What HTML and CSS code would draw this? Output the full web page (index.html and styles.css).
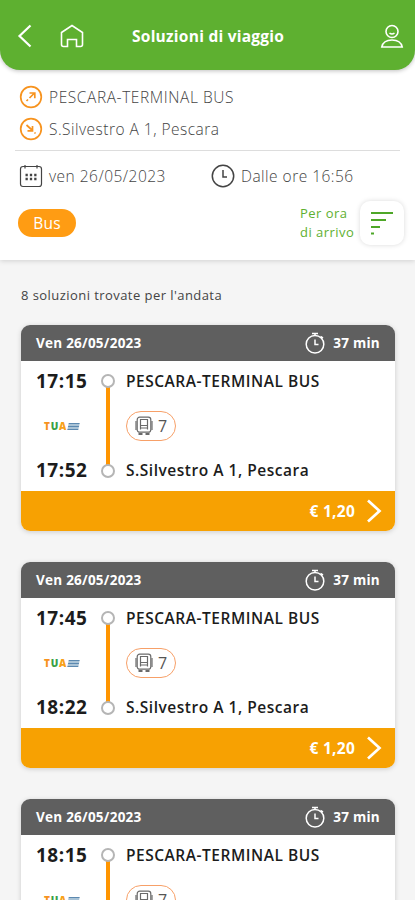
FILE: index.html
```html
<!DOCTYPE html>
<html lang="it">
<head>
    <meta charset="UTF-8">
    <meta name="viewport" content="width=device-width, initial-scale=1.0">
    <title>Soluzioni di viaggio</title>
    <link rel="stylesheet" href="styles.css">
</head>
<body>
    <!-- shared icons -->
    <svg class="sprite" width="0" height="0">
        <symbol id="timer" viewBox="0 0 22 22">
            <circle cx="11" cy="12.3" r="8.8"/>
            <path d="M8 1.500h6M11 2v2M16.500 4.500l2.500 1.500M11 7.500v5h3.500"/>
        </symbol>
        <symbol id="bus" viewBox="0 0 18 20">
            <rect x="2.2" y="1.2" width="13.6" height="15" rx="2.5"/>
            <path d="M5.500 3.500h7v6h-7zM5.500 9.500v4M12.500 9.500v4M5.500 12h7M1 5v9M17 5v9"/>
            <path d="M3.500 18h4M10.500 18h4" stroke-width="2"/>
        </symbol>
        <symbol id="next" viewBox="0 0 16 24">
            <path d="M2 1.5L13.5 12 2 22.500"/>
        </symbol>
    </svg>

    <header class="topbar">
        <svg class="back" width="16" height="26" viewBox="0 0 16 26"><path d="M13.500 2.500L2.500 13l11 10.500"/></svg>
        <svg class="home" width="24" height="24" viewBox="0 0 24 24"><path d="M1.500 8.500L12 1.500l10.500 7v12q0 2-2 2h-4v-7h-9v7h-4q-2 0-2-2z"/></svg>
        <h1>Soluzioni di viaggio</h1>
        <svg class="user" width="24" height="25" viewBox="0 0 24 25">
            <circle cx="12" cy="7.500" r="6"/>
            <path d="M9.500 9q2.500 2 5 0M1.800 23q1.500-7 10.200-7t10.200 7z"/>
        </svg>
    </header>

    <section class="search">
        <div class="place">
            <svg width="24" height="24" viewBox="0 0 24 24"><circle cx="12" cy="12" r="10.300"/><path d="M7.500 16l1.500-1.500M10.500 13l5-5M10.500 8h5.300v5.300"/></svg>
            <span class="from">PESCARA-TERMINAL BUS</span>
        </div>
        <div class="place">
            <svg width="24" height="24" viewBox="0 0 24 24"><circle cx="12" cy="12" r="10.300"/><path d="M7.500 8l5.500 5M13.500 9v4.800H8.500M15.500 15.500l1 1"/></svg>
            <span>S.Silvestro A 1, Pescara</span>
        </div>
        <div class="when">
            <div class="date">
                <svg width="24" height="24" viewBox="0 0 24 24">
                    <path d="M4 2.500h16q2.500 0 2.500 2.500v15q0 2.500-2.500 2.500h-16q-2.500 0-2.500-2.500v-15q0-2.500 2.500-2.500zM6 1v3.500M18 1v3.500"/>
                    <path d="M6.500 11h11M6.500 15h11" stroke-width="2.300" stroke-dasharray="2.300 2.050"/>
                </svg>
                <span>ven 26/05/2023</span>
            </div>
            <div class="hour">
                <svg width="24" height="24" viewBox="0 0 24 24"><circle cx="12" cy="12" r="10.700"/><path d="M12 6v7h4"/></svg>
                <span>Dalle ore 16:56</span>
            </div>
        </div>
        <div class="filters">
            <span class="chip">Bus</span>
            <span class="order">Per ora<br>di arrivo</span>
            <button class="sort">
                <svg width="24" height="26" viewBox="0 0 24 26"><path d="M1 3h22M1 10h15M1 17h9M1 23.500h3"/></svg>
            </button>
        </div>
    </section>

    <main>
        <p class="found">8 soluzioni trovate per l'andata</p>

        <article class="card">
            <div class="card-head">
                <span class="day">Ven 26/05/2023</span>
                <svg width="22" height="22"><use href="#timer"/></svg>
                <span class="duration">37 min</span>
            </div>
            <div class="trip">
                <div class="times"><b>17:15</b><span class="tua"><i>T</i><i>U</i><i>A</i><em></em></span><b>17:52</b></div>
                <div class="track"></div>
                <div class="stops">
                    <b>PESCARA-TERMINAL BUS</b>
                    <span class="line"><svg width="18" height="20"><use href="#bus"/></svg>7</span>
                    <b>S.Silvestro A 1, Pescara</b>
                </div>
            </div>
            <div class="price"><span>€ 1,20</span><svg width="16" height="24"><use href="#next"/></svg></div>
        </article>

        <article class="card">
            <div class="card-head">
                <span class="day">Ven 26/05/2023</span>
                <svg width="22" height="22"><use href="#timer"/></svg>
                <span class="duration">37 min</span>
            </div>
            <div class="trip">
                <div class="times"><b>17:45</b><span class="tua"><i>T</i><i>U</i><i>A</i><em></em></span><b>18:22</b></div>
                <div class="track"></div>
                <div class="stops">
                    <b>PESCARA-TERMINAL BUS</b>
                    <span class="line"><svg width="18" height="20"><use href="#bus"/></svg>7</span>
                    <b>S.Silvestro A 1, Pescara</b>
                </div>
            </div>
            <div class="price"><span>€ 1,20</span><svg width="16" height="24"><use href="#next"/></svg></div>
        </article>

        <!-- continues below the fold -->
        <article class="card">
            <div class="card-head">
                <span class="day">Ven 26/05/2023</span>
                <svg width="22" height="22"><use href="#timer"/></svg>
                <span class="duration">37 min</span>
            </div>
            <div class="trip">
                <div class="times"><b>18:15</b><span class="tua"><i>T</i><i>U</i><i>A</i><em></em></span></div>
                <div class="track"></div>
                <div class="stops">
                    <b>PESCARA-TERMINAL BUS</b>
                    <span class="line"><svg width="18" height="20"><use href="#bus"/></svg>7</span>
                </div>
            </div>
        </article>
    </main>
</body>
</html>
```
FILE: styles.css
```css
* {
    box-sizing: border-box;
}
body {
    margin: 0;
    height: 900px;
    overflow: hidden;
    display: flex;
    flex-direction: column;
    font-family: "Open Sans", sans-serif;
    background-color: #f5f5f5;
    color: #444;
}
svg {
    display: block;
    flex: none;
    fill: none;
    stroke: currentColor;
    stroke-width: 1.5;
}
.sprite {
    display: none;
}

/* top */
.topbar {
    flex: none;
    position: relative;
    display: flex;
    align-items: center;
    height: 70px;
    padding: 2px 11px 0 17px;
    background-color: #5eb030;
    color: #fff;
    border-radius: 0 0 20px 20px;
    box-shadow: 0 1px 4px rgba(0, 0, 0, 0.25);
}
.back {
    stroke-width: 2.2;
    margin-right: 27px;
}
.home, .user {
    stroke-width: 1.6;
}
.topbar h1 {
    flex: 1;
    margin: 0 0 0 48px;
    font-size: 15.5px;
    font-weight: 700;
    letter-spacing: 0.25px;
}
.search {
    flex: none;
    margin-top: -20px;
    height: 210px;
    padding: 31px 15px 0;
    background-color: #fff;
    box-shadow: 0 1px 5px rgba(0, 0, 0, 0.15);
}
.search span {
    font-size: 15.5px;
    font-weight: 300;
    letter-spacing: 0.48px;
}
.place {
    display: flex;
    align-items: center;
    gap: 6px;
    height: 32px;
    padding-left: 4px;
}
.place .from {
    letter-spacing: 0.58px;
}
.place svg {
    color: #f7931e;
    stroke-width: 1.7;
}
.when {
    display: flex;
    height: 51px;
    margin-top: 5px;
    border-top: 1px solid #ddd;
}
.date, .hour {
    display: flex;
    align-items: center;
    gap: 6px;
    padding-left: 4px;
}
.date {
    width: 192px;
}
.date svg {
    stroke-width: 1.2;
}
.filters {
    display: flex;
    align-items: center;
    height: 44px;
    padding: 0 0 0 3px;
}
.search .chip {
    width: 58px;
    height: 28px;
    border-radius: 14px;
    background-color: #ff9c13;
    color: #fff;
    font-weight: 400;
    line-height: 28px;
    letter-spacing: 0.2px;
    text-align: center;
}
.search .order {
    width: 60px;
    margin-left: auto;
    color: #5eb030;
    font-size: 13px;
    font-weight: 400;
    line-height: 19px;
    white-space: nowrap;
}
.sort {
    display: flex;
    align-items: center;
    justify-content: center;
    width: 44px;
    height: 44px;
    margin-right: -4px;
    padding: 0;
    border: none;
    border-radius: 10px;
    background-color: #fff;
    color: #4ea728;
    box-shadow: 0 0 5px rgba(0, 0, 0, 0.15);
}
.sort svg {
    stroke-width: 2;
}

/* results */
main {
    padding: 25px 20px 0 21px;
}
.found {
    margin: 0 0 20px;
    font-size: 13px;
    line-height: 20px;
    letter-spacing: 0.44px;
}
.card {
    height: 206px;
    margin-bottom: 31px;
    border-radius: 9px;
    background-color: #fff;
    box-shadow: 0 1px 5px rgba(0, 0, 0, 0.17);
    overflow: hidden;
}
.card-head {
    display: flex;
    align-items: center;
    height: 36px;
    padding: 0 15px;
    background-color: #5f5f5f;
    color: #fff;
    font-size: 13.5px;
    font-weight: 700;
    letter-spacing: 0.25px;
}
.day {
    flex: 1;
}
.card-head svg {
    margin-right: 7px;
}
.trip {
    display: grid;
    grid-template-columns: 64px 15px 1fr;
    height: 130px;
    padding: 5px 15px 6px;
    color: #1c1c1c;
}
.times, .stops {
    display: flex;
    flex-direction: column;
    align-items: flex-start;
}
.trip b {
    line-height: 30px;
    font-size: 15.5px;
    font-weight: 600;
    letter-spacing: 0.52px;
    white-space: nowrap;
}
.trip .times b {
    font-size: 19px;
    font-weight: 700;
    letter-spacing: 0.5px;
}
.tua {
    display: flex;
    align-items: center;
    height: 30px;
    margin: 15px 0 14px 8px;
    font-size: 10px;
    font-weight: 800;
    letter-spacing: 0.8px;
}
.tua i {
    font-style: normal;
    color: #f7931e;
}
.tua i + i {
    color: #38a048;
}
.tua i + i + i {
    color: #f7a11a;
}
.tua em {
    width: 11px;
    height: 7px;
    margin-left: 1px;
    background: repeating-linear-gradient(#5c89b0 0 1px, #a9c3d6 1px 3px);
    transform: skewX(-12deg);
}
.track {
    display: flex;
    flex-direction: column;
    align-items: center;
    justify-content: space-between;
    padding: 8px 0 7px;
    background: linear-gradient(#ff9500, #ff9500) center / 4px 78px no-repeat;
}
.track::before, .track::after {
    content: "";
    box-sizing: border-box;
    width: 14px;
    height: 14px;
    border: 2px solid #b5b5b5;
    border-radius: 50%;
    background-color: #fff;
}
.stops {
    padding-left: 11px;
}
.line {
    display: flex;
    align-items: center;
    gap: 5px;
    height: 30px;
    width: 50px;
    margin: 15px 0 14px;
    padding-left: 8px;
    border: 1px solid #f7a068;
    border-radius: 15px;
    color: #555;
    font-size: 16px;
}
.line svg {
    color: #6a6a6a;
    stroke-width: 1.2;
}
.price {
    display: flex;
    align-items: center;
    justify-content: flex-end;
    gap: 11px;
    height: 40px;
    padding-right: 13px;
    background-color: #f7a102;
    color: #fff;
    font-size: 15.5px;
    font-weight: 700;
    letter-spacing: 0.25px;
}
.price svg {
    stroke-width: 2.7;
}
```
